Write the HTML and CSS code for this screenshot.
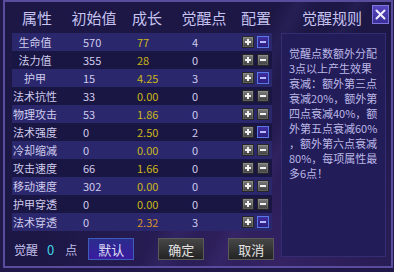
FILE: index.html
```html
<!DOCTYPE html>
<html lang="zh-CN">
<head>
    <meta charset="UTF-8">
    <meta name="viewport" content="width=device-width, initial-scale=1.0">
    <title>觉醒配置</title>
    <link rel="stylesheet" href="styles.css">
</head>
<body>
    <div class="window">
        <div class="header">
            <span class="h-name">属性</span>
            <span class="h-init">初始值</span>
            <span class="h-grow">成长</span>
            <span class="h-awake">觉醒点</span>
            <span class="h-conf">配置</span>
            <span class="h-rule">觉醒规则</span>
            <button class="close">
                <svg width="11" height="11" viewBox="0 0 11 11"><path d="M1.5 1.5 L9.5 9.5 M9.5 1.5 L1.5 9.5" stroke="#f4f2ff" stroke-width="2" stroke-linecap="round"/></svg>
            </button>
        </div>

        <div class="content">
            <div class="table">
                <div class="row"><span class="name">生命值</span><span class="init">570</span><span class="grow">77</span><span class="awake">4</span><span class="conf"><i class="btn plus"></i><i class="btn minus active"></i></span></div>
                <div class="row"><span class="name">法力值</span><span class="init">355</span><span class="grow">28</span><span class="awake">0</span><span class="conf"><i class="btn plus"></i><i class="btn minus"></i></span></div>
                <div class="row"><span class="name">护甲</span><span class="init">15</span><span class="grow">4.25</span><span class="awake">3</span><span class="conf"><i class="btn plus"></i><i class="btn minus active"></i></span></div>
                <div class="row"><span class="name">法术抗性</span><span class="init">33</span><span class="grow">0.00</span><span class="awake">0</span><span class="conf"><i class="btn plus"></i><i class="btn minus"></i></span></div>
                <div class="row"><span class="name">物理攻击</span><span class="init">53</span><span class="grow">1.86</span><span class="awake">0</span><span class="conf"><i class="btn plus"></i><i class="btn minus"></i></span></div>
                <div class="row"><span class="name">法术强度</span><span class="init">0</span><span class="grow">2.50</span><span class="awake">2</span><span class="conf"><i class="btn plus"></i><i class="btn minus active"></i></span></div>
                <div class="row"><span class="name">冷却缩减</span><span class="init">0</span><span class="grow">0.00</span><span class="awake">0</span><span class="conf"><i class="btn plus"></i><i class="btn minus"></i></span></div>
                <div class="row"><span class="name">攻击速度</span><span class="init">66</span><span class="grow">1.66</span><span class="awake">0</span><span class="conf"><i class="btn plus"></i><i class="btn minus"></i></span></div>
                <div class="row"><span class="name">移动速度</span><span class="init">302</span><span class="grow">0.00</span><span class="awake">0</span><span class="conf"><i class="btn plus"></i><i class="btn minus"></i></span></div>
                <div class="row"><span class="name">护甲穿透</span><span class="init">0</span><span class="grow">0.00</span><span class="awake">0</span><span class="conf"><i class="btn plus"></i><i class="btn minus"></i></span></div>
                <div class="row"><span class="name">法术穿透</span><span class="init">0</span><span class="grow boosted">2.32</span><span class="awake">3</span><span class="conf"><i class="btn plus"></i><i class="btn minus active"></i></span></div>

                <div class="footer">
                    <span class="label">觉醒</span>
                    <span class="points">0</span>
                    <span class="label unit">点</span>
                    <button class="action primary">默认</button>
                    <button class="action">确定</button>
                    <button class="action">取消</button>
                </div>
            </div>

            <div class="rules">
                觉醒点数额外分配<br>
                3点以上产生效果<br>
                衰减：额外第三点<br>
                衰减20%，额外第<br>
                四点衰减40%，额<br>
                外第五点衰减60%<br>
                ，额外第六点衰减<br>
                80%，每项属性最<br>
                多6点！
            </div>
        </div>
    </div>
</body>
</html>
```

FILE: styles.css
```css
body {
    margin: 0;
    width: 394px;
    height: 272px;
    overflow: hidden;
    background-color: #1f1848;
    font-family: "Noto Sans CJK SC", "Noto Sans", sans-serif;
    color: #cfcbec;
}
.window {
    box-sizing: border-box;
    width: 390px;
    height: 268px;
    margin-left: 3px;
    border: 2px solid #5a4c9c;
    background:
        linear-gradient(118deg, transparent 52%, rgba(120, 100, 220, 0.10) 56%, transparent 60%),
        linear-gradient(118deg, transparent 64%, rgba(120, 100, 220, 0.08) 67%, transparent 70%),
        radial-gradient(ellipse at 70% 100%, rgba(110, 60, 170, 0.30), transparent 60%),
        #1c1745;
}
.header {
    display: flex;
    align-items: center;
    height: 31px;
    padding-left: 7px;
    font-size: 15px;
    color: #c6c2f0;
}
.header span {
    text-align: center;
    line-height: 31px;
}
.h-name { width: 50px; }
.h-init { width: 64px; }
.h-grow { width: 42px; }
.h-awake { width: 72px; }
.h-conf { width: 32px; }
.h-rule { padding-left: 30px; }
.close {
    align-self: flex-start;
    margin: 3px 2px 0 auto;
    width: 17px;
    height: 19px;
    padding: 0;
    border: 1px solid #7e74dc;
    background: linear-gradient(#5646c0, #3a2e98);
    display: flex;
    align-items: center;
    justify-content: center;
}
.content {
    display: flex;
    gap: 9px;
    padding-left: 7px;
}
.table {
    width: 260px;
    flex-shrink: 0;
}
.row {
    display: flex;
    align-items: center;
    height: 18px;
    font-size: 11px;
    background-color: #1a1643;
}
.row:nth-child(odd) {
    background-color: #2a276c;
}
.name {
    width: 46px;
    text-align: center;
    white-space: nowrap;
}
.init {
    width: 54px;
    padding-left: 25px;
}
.grow {
    width: 55px;
    color: #cbb818;
}
.grow.boosted {
    color: #d8952c;
}
.awake {
    width: 50px;
}
.conf {
    display: flex;
    gap: 3px;
}
.btn {
    position: relative;
    box-sizing: border-box;
    width: 12px;
    height: 12px;
    border: 1px solid #262626;
    background: linear-gradient(#7c7c7c, #404040);
    box-shadow: inset 0 0 0 1px rgba(255, 255, 255, 0.14);
}
.btn::before,
.btn::after {
    content: "";
    position: absolute;
    background-color: #f2f2f2;
}
.btn::before {
    left: 2px;
    right: 2px;
    top: 4px;
    height: 2px;
}
.plus::after {
    top: 2px;
    bottom: 2px;
    left: 4px;
    width: 2px;
}
.minus.active {
    border-color: #5a78e4;
    background: linear-gradient(#3e2ea0, #2c1f80);
    box-shadow: none;
}
.minus.active::before {
    background-color: #b8b8ff;
}
.footer {
    display: flex;
    align-items: center;
    height: 22px;
    margin-top: 7px;
    font-size: 12px;
    white-space: nowrap;
}
.footer > * {
    flex-shrink: 0;
}
.label {
    padding-left: 2px;
    color: #c2bee8;
}
.points {
    margin-left: 9px;
    color: #3fd4e6;
    font-size: 13px;
}
.unit {
    margin-left: 9px;
}
.action {
    box-sizing: border-box;
    width: 46px;
    height: 22px;
    margin-left: 24px;
    padding: 0;
    border: 1px solid #5a5a5a;
    background: linear-gradient(#464646, #242424);
    color: #e2e2e2;
    font-family: "Noto Sans CJK SC", sans-serif;
    font-size: 13px;
}
.action.primary {
    margin-left: 11px;
    border-color: #3e5cba;
    background: linear-gradient(#2a2c8c, #3a1ca0);
    color: #dcdcf6;
}
.rules {
    box-sizing: border-box;
    width: 105px;
    height: 224px;
    padding: 12px 4px 0 7px;
    border: 1px solid #342d74;
    background-color: #221c58;
    font-size: 11px;
    line-height: 15px;
    color: #bcb8e6;
    white-space: nowrap;
}
```
